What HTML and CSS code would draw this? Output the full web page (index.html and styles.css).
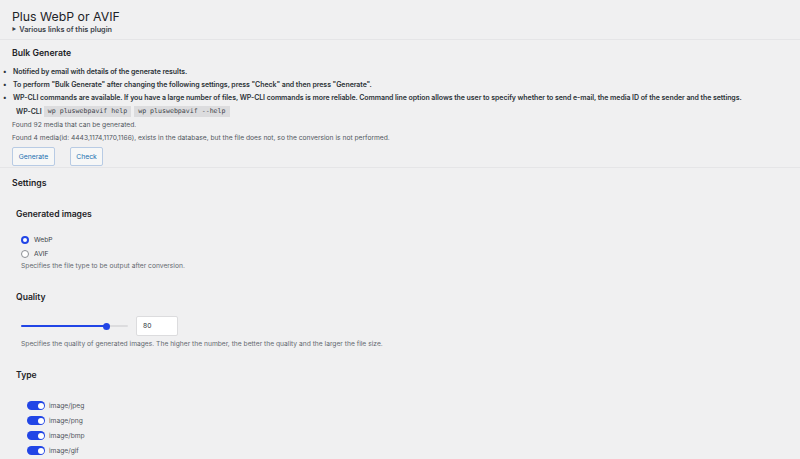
FILE: index.html
```
<!DOCTYPE html>
<html lang="en">
<head>
  <meta charset="UTF-8" />
  <title>Plus WebP or AVIF</title>
  <meta name="viewport" content="width=device-width, initial-scale=1.0" />
  <link rel="stylesheet" href="styles.css">
</head>
<body>

  <div class="page-head">
    <h1>Plus WebP or AVIF</h1>
    <details class="links">
      <summary>Various links of this plugin</summary>
    </details>
  </div>

  <section class="bulk">
    <h2>Bulk Generate</h2>
    <ul class="notes">
      <li>Notified by email with details of the generate results.</li>
      <li>To perform "Bulk Generate" after changing the following settings, press "Check" and then press "Generate".</li>
      <li>WP-CLI commands are available. If you have a large number of files, WP-CLI commands is more reliable. Command line option allows the user to specify whether to send e-mail, the media ID of the sender and the settings.</li>
    </ul>
    <div class="cli">
      <span class="cli-label">WP-CLI</span>
      <code>wp pluswebpavif help</code>
      <code>wp pluswebpavif --help</code>
    </div>
    <p class="info">Found 92 media that can be generated.</p>
    <p class="info">Found 4 media(id: 4443,1174,1170,1166), exists in the database, but the file does not, so the conversion is not performed.</p>
    <div class="button-group">
      <button class="btn btn-generate">Generate</button>
      <button class="btn btn-check">Check</button>
    </div>
  </section>

  <section class="settings">
    <h2>Settings</h2>

    <h3>Generated images</h3>
    <div class="field">
      <label class="radio"><span class="dot checked"></span>WebP</label>
      <label class="radio"><span class="dot"></span>AVIF</label>
      <p class="help">Specifies the file type to be output after conversion.</p>
    </div>

    <h3>Quality</h3>
    <div class="field">
      <div class="quality-row">
        <div class="slider">
          <div class="slider-fill" style="width: 80%"></div>
          <div class="slider-thumb" style="left: 80%"></div>
        </div>
        <div class="number-box">80</div>
      </div>
      <p class="help help-quality">Specifies the quality of generated images. The higher the number, the better the quality and the larger the file size.</p>
    </div>

    <h3>Type</h3>
    <div class="types">
      <label class="toggle"><span class="switch"></span>image/jpeg</label>
      <label class="toggle"><span class="switch"></span>image/png</label>
      <label class="toggle"><span class="switch"></span>image/bmp</label>
      <label class="toggle"><span class="switch"></span>image/gif</label>
    </div>
  </section>

</body>
</html>
```

FILE: styles.css
```
body {
  font-family: Inter, 'Noto Sans', sans-serif;
  background-color: #f0f0f1;
  color: #1d2327;
  margin: 0;
  font-size: 6.7px;
}

.page-head {
  padding: 10px 12px 3px;
  border-bottom: 1px solid #e5e5e7;
}

h1 {
  margin: 0;
  font-size: 12.3px;
  font-weight: 400;
  line-height: 14px;
}

.links summary {
  font-size: 7.3px;
  font-weight: 600;
  line-height: 12px;
  color: #3c434a;
  list-style: none;
}

.links summary::before {
  content: "▶";
  font-size: 4.5px;
  margin-right: 3px;
  vertical-align: 1px;
}

h2 {
  margin: 0;
  font-size: 8.7px;
  font-weight: 600;
  line-height: 12px;
}

.bulk {
  padding: 7px 0 1px 12px;
  border-bottom: 1px solid #e5e5e7;
}

.notes {
  list-style: none;
  margin: 6px 0 0 -12px;
  padding: 0;
}

.notes li {
  font-size: 7px;
  line-height: 13px;
  font-weight: 600;
  letter-spacing: -0.07px;
  color: #2c3338;
  white-space: nowrap;
}

.notes li::before {
  content: "•";
  display: inline-block;
  width: 13px;
  text-indent: 3px;
}

.cli {
  display: flex;
  align-items: center;
  gap: 3px;
  margin: 2px 0 0 4px;
  height: 11px;
}

.cli-label {
  font-size: 7px;
  font-weight: 600;
  color: #2c3338;
  margin-right: -1px;
}

code {
  font-family: 'DejaVu Sans Mono', monospace;
  font-size: 6.6px;
  background: #dcdcde;
  color: #3c434a;
  padding: 0 4px;
  line-height: 11px;
}

.info {
  margin: 0;
  line-height: 13px;
  color: #50575e;
}

.cli + .info {
  margin-top: 2px;
}

.button-group {
  display: flex;
  gap: 15px;
  margin-top: 2px;
}

.btn {
  height: 19px;
  background: #f6f7f7;
  border: 1px solid #b8cbe4;
  border-radius: 2px;
  color: #2271b1;
  font-family: inherit;
  font-size: 6.8px;
  padding: 0;
}

.btn-generate {
  width: 43px;
}

.btn-check {
  width: 33px;
}

.settings {
  padding: 9px 0 0 12px;
}

h3 {
  margin: 19px 0 0 4px;
  font-size: 8.6px;
  font-weight: 600;
  line-height: 12px;
}

.field {
  padding: 13px 0 0 9px;
}

.radio {
  display: flex;
  align-items: center;
  gap: 5px;
  height: 14px;
  color: #3c434a;
}

.dot {
  box-sizing: border-box;
  width: 8px;
  height: 8px;
  border: 1px solid #8c8f94;
  border-radius: 50%;
  background: #fff;
}

.dot.checked {
  border: 2.5px solid #2145e6;
}

.help {
  margin: 0;
  line-height: 11px;
  color: #646970;
}

.help-quality {
  margin-top: 3px;
}

.quality-row {
  display: flex;
  align-items: center;
  gap: 8px;
}

.slider {
  position: relative;
  width: 107px;
  height: 2px;
  background: #dcdcde;
  border-radius: 1px;
}

.slider-fill {
  height: 2px;
  background: #2145e6;
  border-radius: 1px;
}

.slider-thumb {
  position: absolute;
  top: -2.5px;
  width: 7px;
  height: 7px;
  margin-left: -3.5px;
  border-radius: 50%;
  background: #2145e6;
}

.number-box {
  box-sizing: border-box;
  width: 42px;
  height: 20px;
  background: #fff;
  border: 1px solid #dcdcde;
  border-radius: 2px;
  line-height: 18px;
  padding-left: 6px;
  color: #2c3338;
}

.types {
  padding: 17px 0 0 15px;
}

.toggle {
  display: flex;
  align-items: center;
  gap: 4px;
  height: 15.1px;
  color: #50575e;
}

.switch {
  position: relative;
  width: 18px;
  height: 9px;
  border-radius: 5px;
  background: #2145e6;
}

.switch::after {
  content: "";
  position: absolute;
  right: 1.5px;
  top: 1.5px;
  width: 6px;
  height: 6px;
  border-radius: 50%;
  background: #fff;
}
```
